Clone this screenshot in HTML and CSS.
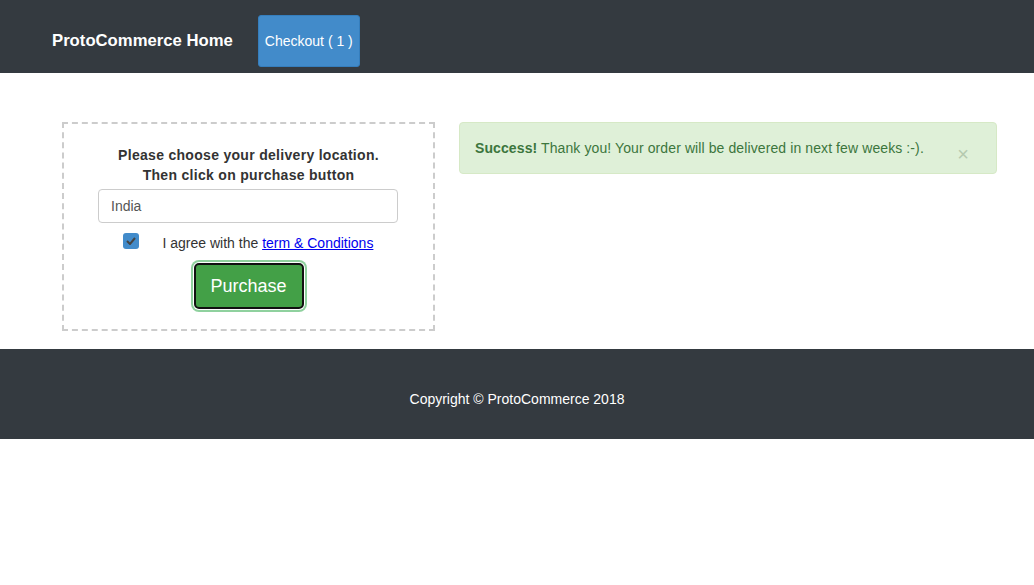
FILE: index.html
```html
<!DOCTYPE html>
<html>
<head>
<meta charset="utf-8">
<link rel="stylesheet" href="styles.css">
</head>
<body>
<nav class="navbar">
  <a class="brand">ProtoCommerce Home</a>
  <a class="checkout">Checkout ( 1 )</a>
</nav>
<main class="content">
  <section class="delivery">
    <h4 class="delivery-title">Please choose your delivery location.<br>Then click on purchase button</h4>
    <input class="country" type="text" value="India">
    <div class="agree">
      <span class="checkbox">
        <svg width="10" height="8" viewBox="0 0 10 8"><path d="M1 4 L4 7 L9 1" fill="none" stroke="#444" stroke-width="2"/></svg>
      </span>
      <span class="agree-text">I agree with the <a class="terms" href="#">term &amp; Conditions</a></span>
    </div>
    <button class="purchase">Purchase</button>
  </section>
  <div class="alert">
    <span><strong>Success!</strong> Thank you! Your order will be delivered in next few weeks :-).</span>
    <span class="close">×</span>
  </div>
</main>
<footer class="footer">Copyright © ProtoCommerce 2018</footer>
</body>
</html>
```
FILE: styles.css
```css
* { box-sizing: border-box; }
body {
  margin: 0;
  font-family: "Liberation Sans", Arial, sans-serif;
  font-size: 14px;
  color: #333;
  background: #fff;
}
.navbar {
  height: 73px;
  background: #343a40;
  display: flex;
  align-items: center;
  padding-left: 52px;
  padding-top: 8px;
}
.brand {
  color: #fff;
  font-size: 16.7px;
  font-weight: bold;
  margin-right: 25px;
  padding-top: 1px;
}
.checkout {
  display: flex;
  align-items: center;
  justify-content: center;
  width: 102px;
  height: 52px;
  background: #428bca;
  border: 1px solid #357ebd;
  border-radius: 3px;
  color: #fff;
  font-size: 14px;
}
.content {
  display: flex;
  align-items: flex-start;
  gap: 24px;
  padding: 49px 37px 18px 62px;
}
.delivery {
  width: 373px;
  border: 2px dashed #ccc;
  display: flex;
  flex-direction: column;
  align-items: center;
  padding: 21px 0 20px;
}
.delivery-title {
  margin: 0 0 4px;
  font-size: 14px;
  font-weight: bold;
  line-height: 20px;
  text-align: center;
  letter-spacing: 0.3px;
  color: #333;
}
.country {
  width: 300px;
  height: 34px;
  border: 1px solid #ccc;
  border-radius: 4px;
  padding: 0 12px;
  font-family: inherit;
  font-size: 14px;
  color: #555;
  margin-right: 1px;
}
.agree {
  display: flex;
  align-items: flex-start;
  margin-top: 10px;
  width: 252px;
}
.checkbox {
  width: 16px;
  height: 16px;
  border-radius: 3px;
  background: #428bca;
  display: flex;
  align-items: center;
  justify-content: center;
  margin-right: 24px;
}
.agree-text { color: #333; font-size: 14px; line-height: 20px; }
.terms { color: #00e; text-decoration: underline; }
.purchase {
  margin-top: 10px;
  width: 110px;
  height: 46px;
  background: #43a047;
  color: #fff;
  font-family: inherit;
  font-size: 18px;
  border: 2px solid #111;
  border-radius: 5px;
  box-shadow: 0 0 0 1px #fff, 0 0 0 3px #8fd19e;
}
.alert {
  flex: 1;
  height: 52px;
  background: #dff0d8;
  border: 1px solid #d6e9c6;
  border-radius: 4px;
  color: #3c763d;
  display: flex;
  align-items: center;
  padding: 0 15px;
  justify-content: space-between;
  letter-spacing: 0.1px;
}
.alert strong { font-weight: bold; }
.close {
  color: #b5c9af;
  font-size: 20px;
  margin-right: 12px;
  margin-top: 12px;
}
.footer {
  height: 90px;
  background: #343a40;
  color: #fff;
  display: flex;
  align-items: center;
  justify-content: center;
  font-size: 14px;
  padding-top: 10px;
}
```
